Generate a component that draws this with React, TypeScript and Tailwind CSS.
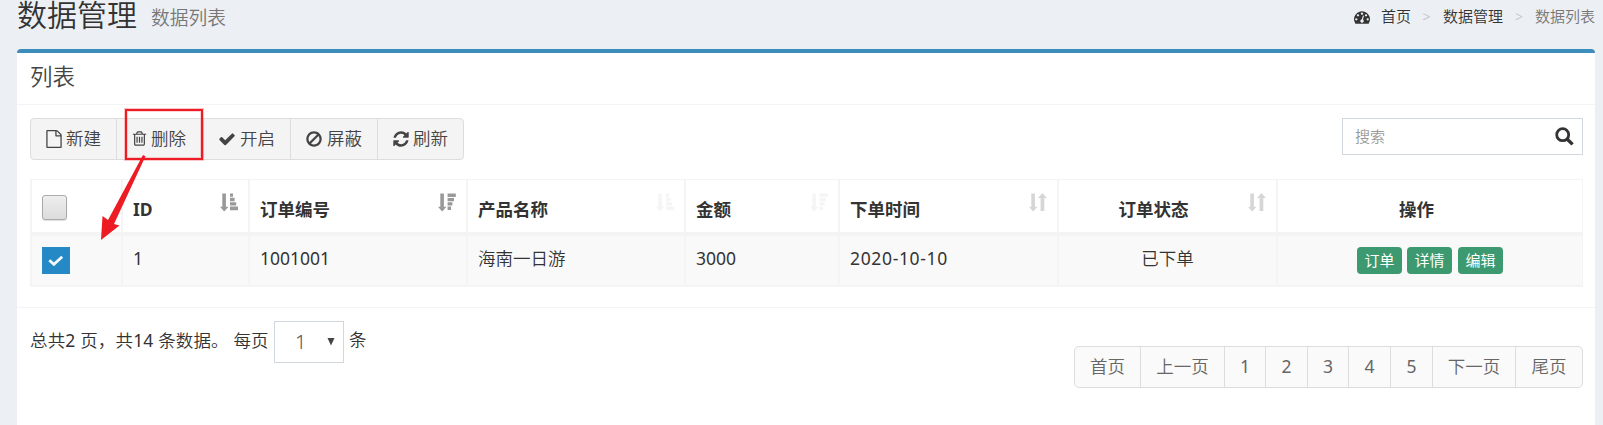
import React from "react";

const ICONS = {
  file: "M1596 380q28 28 48 76t20 88v1152q0 40-28 68t-68 28h-1344q-40 0-68-28t-28-68v-1600q0-40 28-68t68-28h896q40 0 88 20t76 48zm-444-244v376h376q-10-29-22-41l-313-313q-12-12-41-22zm384 1528v-1024h-416q-40 0-68-28t-28-68v-416h-768v1536h1280z",
  trash:
    "M704 736v576q0 14-9 23t-23 9h-64q-14 0-23-9t-9-23v-576q0-14 9-23t23-9h64q14 0 23 9t9 23zm256 0v576q0 14-9 23t-23 9h-64q-14 0-23-9t-9-23v-576q0-14 9-23t23-9h64q14 0 23 9t9 23zm256 0v576q0 14-9 23t-23 9h-64q-14 0-23-9t-9-23v-576q0-14 9-23t23-9h64q14 0 23 9t9 23zm128 724v-948h-896v948q0 22 7 40.5t14.5 27 10.5 8.5h832q3 0 10.5-8.5t14.5-27 7-40.5zm-672-1076h448l-48-117q-7-9-17-11h-317q-10 2-17 11zm928 32v64q0 14-9 23t-23 9h-96v948q0 83-47 143.5t-113 60.5h-832q-66 0-113-58.5t-47-141.5v-952h-96q-14 0-23-9t-9-23v-64q0-14 9-23t23-9h309l70-167q15-37 54-63t79-26h320q40 0 79 26t54 63l70 167h309q14 0 23 9t9 23z",
  check:
    "M1671 566q0 40-28 68l-724 724-136 136q-28 28-68 28t-68-28l-136-136-362-362q-28-28-28-68t28-68l136-136q28-28 68-28t68 28l294 295 656-657q28-28 68-28t68 28l136 136q28 28 28 68z",
  ban: "M1440 893q0-161-87-295l-754 753q137 89 297 89 111 0 211.5-43.5t173.5-116.5 116-174.5 43-212.5zm-999 299l755-754q-135-91-300-91-148 0-273 73t-198 199-73 274q0 162 89 299zm1223-299q0 157-61 300t-163.5 246-245 164-298.5 61-298.5-61-245-164-163.5-246-61-300 61-299.5 163.5-245.5 245-164 298.5-61 298.5 61 245 164 163.5 245.5 61 299.5z",
  refresh:
    "M1639 1056q0 5-1 7-64 268-268 434.5t-478 166.5q-146 0-282.5-55t-243.5-157l-129 129q-19 19-45 19t-45-19-19-45v-448q0-26 19-45t45-19h448q26 0 45 19t19 45-19 45l-137 137q71 66 161 102t187 36q134 0 250-65t186-179q11-17 53-117 8-23 30-23h192q13 0 22.5 9.5t9.5 22.5zm25-800v448q0 26-19 45t-45 19h-448q-26 0-45-19t-19-45 19-45l138-138q-148-137-349-137-134 0-250 65t-186 179q-11 17-53 117-8 23-30 23h-199q-13 0-22.5-9.5t-9.5-22.5v-7q65-268 270-434.5t480-166.5q146 0 284 55.5t245 156.5l130-129q19-19 45-19t45 19 19 45z",
  dashboard:
    "M384 1152q0-53-37.5-90.5t-90.5-37.5-90.5 37.5-37.5 90.5 37.5 90.5 90.5 37.5 90.5-37.5 37.5-90.5zm192-448q0-53-37.5-90.5t-90.5-37.5-90.5 37.5-37.5 90.5 37.5 90.5 90.5 37.5 90.5-37.5 37.5-90.5zm428 481l101-382q6-26-7.5-48.5t-38.5-29.5-48 6.5-30 39.5l-101 382q-60 5-107 43.5t-63 98.5q-20 77 20 146t117 89 146-20 89-117q16-60-6-117t-72-91zm660-33q0-53-37.5-90.5t-90.5-37.5-90.5 37.5-37.5 90.5 37.5 90.5 90.5 37.5 90.5-37.5 37.5-90.5zm-640-640q0-53-37.5-90.5t-90.5-37.5-90.5 37.5-37.5 90.5 37.5 90.5 90.5 37.5 90.5-37.5 37.5-90.5zm448 192q0-53-37.5-90.5t-90.5-37.5-90.5 37.5-37.5 90.5 37.5 90.5 90.5 37.5 90.5-37.5 37.5-90.5zm320 448q0 261-141 483-19 29-54 29h-1402q-35 0-54-29-141-221-141-483 0-182 71-348t191-286 286-191 348-71 348 71 286 191 191 286 71 348z",
};

function Icon({ name, className }: { name: keyof typeof ICONS; className: string }) {
  return (
    <svg viewBox="0 0 1792 1792" className={`shrink-0 ${className}`} fill="currentColor">
      <path d={ICONS[name]} />
    </svg>
  );
}

type Sort = "asc" | "desc" | "both";

function SortIcon({ kind, className }: { kind: Sort; className: string }) {
  return (
    <svg width="18" height="19" viewBox="0 0 18 19" className={`absolute top-[13px] ${className}`} fill="currentColor">
      <path d="M2.3 0.5h3.6v13.2h2.6L4.2 18.6 0 13.7h2.3z" />
      {kind === "asc" && <path d="M10 0.5h3v3.3h-3zM10 4.8h4.6v3.4H10zM10 9.2h6.2v3.4H10zM10 13.6h8v3.6h-8z" />}
      {kind === "desc" && <path d="M9.6 0.5h8.2v3.4H9.6zM9.6 4.9h6.4v3.4H9.6zM9.6 9.2h4.8v3.4H9.6zM9.6 13.6h3.4v3.4H9.6z" />}
      {kind === "both" && <path d="M13.4 0l4.5 5h-2.6v13h-3.7V5H9z" />}
    </svg>
  );
}

const TOOLS: { icon: keyof typeof ICONS; label: string; width: string; iconClass: string }[] = [
  { icon: "file", label: "新建", width: "w-[85px] pl-[14px]", iconClass: "size-[18px] mr-[3px]" },
  { icon: "trash", label: "删除", width: "w-[87px] pl-[14px]", iconClass: "size-[17px] mr-[3px]" },
  { icon: "check", label: "开启", width: "w-[87px] pl-[14px]", iconClass: "size-[18px] mr-[4px]" },
  { icon: "ban", label: "屏蔽", width: "w-[87px] pl-[14px]", iconClass: "size-[18px] mr-[4px]" },
  { icon: "refresh", label: "刷新", width: "w-[86px] pl-[14px]", iconClass: "size-[18px] mr-[3px]" },
];

const COLS = "grid-cols-[91px_127px_218px_218px_154px_219px_219px_306px]";
const HEAD = "relative border-l-2 border-[#f4f4f4] pl-[10px] pt-[17px]";
const CELL = "border-l-2 border-[#f4f4f4] pl-[10px] pt-[10px]";

const PAGES = [
  { label: "首页", width: "w-[65px]" },
  { label: "上一页", width: "w-[84px]" },
  { label: "1", width: "w-[41px] font-normal" },
  { label: "2", width: "w-[42px] font-normal" },
  { label: "3", width: "w-[41px] font-normal" },
  { label: "4", width: "w-[42px] font-normal" },
  { label: "5", width: "w-[42px] font-normal" },
  { label: "下一页", width: "w-[83px]" },
  { label: "尾页", width: "w-[67px]" },
];

export default function App() {
  return (
    <div className="relative flex h-[425px] w-[1603px] flex-col overflow-hidden bg-[#ecf0f5] pl-[17px] pr-[8px] font-['Noto_Sans','Noto_Sans_CJK_SC',sans-serif] text-[17.5px] leading-[25px] font-[350] text-[#333]">
      <header className="flex h-[49px] shrink-0 justify-between">
        <h1 className="flex items-start whitespace-nowrap">
          <span className="text-[30px] leading-[30px]">数据管理</span>
          <small className="ml-[14px] pt-[5px] text-[18.75px] leading-[26px] text-[#777]">数据列表</small>
        </h1>
        <nav className="flex h-[32px] items-center text-[15px] text-[#333]">
          <Icon name="dashboard" className="mr-[11px] mt-[2px] size-[16px]" />
          <span>首页</span>
          <span className="w-[32px] pr-[1px] text-center text-[14px] text-[#bbb]">&gt;</span>
          <span>数据管理</span>
          <span className="w-[32px] text-center text-[14px] text-[#bbb]">&gt;</span>
          <span className="text-[#777]">数据列表</span>
        </nav>
      </header>

      <section className="flex grow flex-col rounded-t-[4px] border-t-4 border-[#3c8dbc] bg-white">
        <div className="flex h-[52px] shrink-0 items-center border-b border-[#f4f4f4] px-[13px] pb-[4px] text-[22.5px] text-[#444]">列表</div>

        <div className="flex h-[203px] shrink-0 flex-col border-b border-[#f4f4f4] px-[13px] pr-[12px] pt-[13px]">
          <div className="flex items-start justify-between">
            <div className="flex h-[42px] overflow-hidden rounded-[4px] border border-[#ddd] bg-[#f4f4f4] text-[#444]">
              {TOOLS.map((t, i) => (
                <button key={t.label} className={`flex items-center whitespace-nowrap pb-[1px] ${t.width} ${i ? "border-l border-[#ddd]" : ""}`}>
                  <Icon name={t.icon} className={t.iconClass} />
                  <span className="-mt-px">{t.label}</span>
                </button>
              ))}
            </div>
            <div className="flex h-[37px] w-[241px] items-center justify-between border border-[#d2d6de] pl-[12px] pr-[8px] text-[15px] text-[#999]">
              搜索
              <svg width="19" height="19" viewBox="0 0 19 19" fill="none" stroke="#333">
                <circle cx="7.7" cy="7.7" r="6" strokeWidth="2.8" />
                <path d="M12 12l5.6 5.4" strokeWidth="3.4" />
              </svg>
            </div>
          </div>

          <div className="mt-[19px] border-r border-t border-[#f4f4f4]">
            <div className={`grid h-[56px] border-b-4 border-[#f4f4f4] font-bold ${COLS}`}>
              <div className="border-l-2 border-[#f4f4f4] pl-[10px] pt-[15px]">
                <div className="size-[25px] rounded-[3px] border border-[#aaa] bg-linear-to-b from-[#eee] to-[#dcdcdc] shadow-[0_1px_1px_#ddd]" />
              </div>
              <div className={HEAD}>ID<SortIcon kind="asc" className="right-[10px] text-[#999]" /></div>
              <div className={HEAD}>订单编号<SortIcon kind="desc" className="right-[10px] text-[#999]" /></div>
              <div className={HEAD}>产品名称<SortIcon kind="asc" className="right-[10px] text-[#f5f5f5]" /></div>
              <div className={HEAD}>金额<SortIcon kind="desc" className="right-[10px] text-[#f5f5f5]" /></div>
              <div className={HEAD}>下单时间<SortIcon kind="both" className="right-[10px] text-[#d6d6d6]" /></div>
              <div className={`${HEAD} pr-[38px] text-center`}>订单状态<SortIcon kind="both" className="right-[10px] text-[#d6d6d6]" /></div>
              <div className={`${HEAD} pr-[37px] text-center`}>操作</div>
            </div>
            <div className={`grid h-[51px] border-b-2 border-[#f4f4f4] bg-[#f9f9f9] ${COLS}`}>
              <div className="border-l-2 border-[#f4f4f4] pl-[10px] pt-[11px]">
                <div className="flex h-[27px] w-[28px] items-center justify-center bg-[#2489c5]">
                  <svg width="16" height="12" viewBox="0 0 16 12" fill="none" stroke="#f4f8fb" strokeWidth="2.8">
                    <path d="M1.3 5.3l4.6 4L14.2 1.8" />
                  </svg>
                </div>
              </div>
              <div className={`${CELL} font-normal`}>1</div>
              <div className={`${CELL} font-normal`}>1001001</div>
              <div className={CELL}>海南一日游</div>
              <div className={`${CELL} font-normal`}>3000</div>
              <div className={`${CELL} font-normal tracking-[0.65px]`}>2020-10-10</div>
              <div className={`${CELL} pr-[10px] text-center`}>已下单</div>
              <div className="flex items-start gap-[5px] border-l-2 border-[#f4f4f4] pl-[79px] pt-[11px] text-[15px] font-normal text-white">
                <button className="flex h-[27px] w-[45px] items-center justify-center rounded-[4px] bg-[#3d9970]">订单</button>
                <button className="mr-[1px] flex h-[27px] w-[45px] items-center justify-center rounded-[4px] bg-[#3d9970]">详情</button>
                <button className="flex h-[27px] w-[45px] items-center justify-center rounded-[4px] bg-[#3d9970]">编辑</button>
              </div>
            </div>
          </div>
        </div>

        <footer className="flex justify-between pl-[13px] pr-[12px] pt-[13px]">
          <div className="flex h-[42px] whitespace-nowrap">
            <span className="mt-[7px] w-[244px] tracking-[0.15px]">
              总共<span className="font-normal">2</span> 页，共<span className="font-normal">14</span> 条数据。 每页
            </span>
            <div className="flex h-[42px] w-[70px] items-center justify-between border border-[#d2d6de] pb-[2px] pl-[20px] pr-[8px] text-[20px] text-[#555]">
              1
              <svg width="8" height="8" viewBox="0 0 8 8" fill="#444" className="mt-[2px]"><path d="M0.5 0h7L4 7.5z" /></svg>
            </div>
            <span className="ml-[5px] mt-[6px]">条</span>
          </div>
          <div className="mt-[25px] flex h-[42px] overflow-hidden rounded-[5px] border border-[#ddd] bg-[#fafafa] text-[#666]">
            {PAGES.map((p, i) => (
              <button key={p.label} className={`flex items-center justify-center whitespace-nowrap pb-[1px] ${p.width} ${i ? "border-l border-[#ddd]" : ""}`}>{p.label}</button>
            ))}
          </div>
        </footer>
      </section>

      <div className="absolute left-[125px] top-[109px] h-[51px] w-[78px] border-2 border-[#ed1c24] shadow-[0_0_0_1px_#ed1c2440,inset_0_0_0_1px_#ed1c2430]" />
      <svg className="absolute left-[96px] top-[150px]" width="54" height="94" viewBox="0 0 54 94" fill="#ed1c24">
        <path d="M47 5L49.5 6.2L18 74L23.5 75.5L5 90L6.5 66L12 70Z" />
      </svg>
    </div>
  );
}
